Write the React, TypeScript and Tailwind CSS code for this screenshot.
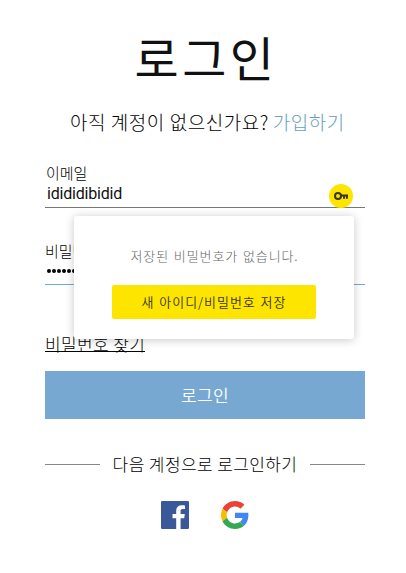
import React from "react";

function KeyBadge() {
  return (
    <span className="absolute right-3 top-0 flex h-6 w-6 items-center justify-center rounded-full bg-[#fee500]">
      <svg width="14" height="8" viewBox="0 0 14 8" fill="none" stroke="#3c3519" strokeWidth="2">
        <circle cx="4" cy="4" r="3" />
        <path d="M7 3.4h7M10 3.4v3.4M12.9 3.4v3.4" />
      </svg>
    </span>
  );
}

function FacebookLogo() {
  return (
    <svg width="28" height="28" viewBox="0 0 28 28">
      <rect width="28" height="28" rx="1.2" fill="#3b5998" />
      <path
        fill="#fff"
        d="M15.2 28V17.2h-3.7v-4.3h3.7V9.8c0-3.7 2.2-5.6 5.5-5.6 1.5 0 2.9.1 3.3.2V8h-2.3c-1.8 0-2.1.9-2.1 2.1v2.8h4.2l-.6 4.3h-3.6V28z"
      />
    </svg>
  );
}

function GoogleLogo() {
  return (
    <svg width="28" height="28" viewBox="0 0 48 48">
      <path fill="#ea4335" d="M24 9.5c3.54 0 6.71 1.22 9.21 3.6l6.85-6.85C35.9 2.38 30.47 0 24 0 14.62 0 6.51 5.38 2.56 13.22l7.98 6.19C12.43 13.72 17.74 9.5 24 9.5z" />
      <path fill="#4285f4" d="M46.98 24.55c0-1.57-.15-3.09-.38-4.55H24v9.02h12.94c-.58 2.96-2.26 5.48-4.78 7.18l7.73 6c4.51-4.18 7.09-10.36 7.09-17.65z" />
      <path fill="#fbbc05" d="M10.53 28.59c-.48-1.45-.76-2.99-.76-4.59s.27-3.14.76-4.59l-7.98-6.19C.92 16.46 0 20.12 0 24c0 3.88.92 7.54 2.56 10.78l7.97-6.19z" />
      <path fill="#34a853" d="M24 48c6.48 0 11.93-2.13 15.89-5.81l-7.73-6c-2.15 1.45-4.92 2.3-8.16 2.3-6.26 0-11.57-4.22-13.47-9.91l-7.98 6.19C6.51 42.62 14.62 48 24 48z" />
    </svg>
  );
}

function SavePasswordPopup() {
  return (
    <div className="absolute left-[29px] top-2 flex h-[123px] w-[280px] flex-col items-center rounded-[3px] bg-white pt-7 shadow-[0_1px_10px_rgba(0,0,0,0.22)]">
      <p className="h-6 whitespace-nowrap pl-px text-[13px] font-light leading-[23px] tracking-[0.9px] [word-spacing:1px] text-[#666]">저장된 비밀번호가 없습니다.</p>
      <button className="mt-[17px] h-[34px] w-[204px] whitespace-nowrap rounded-[2px] bg-[#fee500] text-[13px] font-[350] tracking-[0.95px] [word-spacing:1px] text-[#3c3519]">
        새 아이디/비밀번호 저장
      </button>
    </div>
  );
}

export default function App() {
  return (
    <main className="h-[573px] w-[406px] overflow-hidden bg-white pl-[45px] pr-[41px] font-['Noto_Sans_CJK_KR',sans-serif] text-[#111]">
      <h1 className="h-[100px] whitespace-nowrap pl-[2px] pt-[19px] text-center text-[48px] font-normal leading-[74px] tracking-[3.5px]">로그인</h1>
      <p className="h-11 whitespace-nowrap pl-[25px] text-[19px] font-light leading-[43px] tracking-[0.55px] text-black">
        아직 계정이 없으신가요? <a className="-ml-px text-[#6a9fbc]">가입하기</a>
      </p>
      <div className="mt-[18px] h-[22px] pl-px text-[15px] font-light leading-[22px] text-black">이메일</div>
      <div className="relative h-6 border-b border-[#777]">
        <div className="pl-[2px] font-['Roboto','Liberation_Sans',sans-serif] text-base leading-5 tracking-[-0.2px]">idididibidid</div>
        <KeyBadge />
      </div>
      <div className="relative h-[163px]">
        <div className="h-[31px]" />
        <div className="h-6 text-[15px] font-light leading-6 text-black">비밀번호</div>
        <div className="flex h-[22px] gap-[1px] border-b border-[#76a8d1] pl-[2px] pt-[6px]">
          {Array.from({ length: 8 }, (_, i) => (
            <span key={i} className="h-1 w-1 rounded-full bg-black" />
          ))}
        </div>
        <a className="mt-[46px] block h-[21px] w-[100px] whitespace-nowrap border-b border-black text-[17px] font-light leading-[25px] tracking-[0.4px] text-black">비밀번호 찾기</a>
        <SavePasswordPopup />
      </div>
      <button className="block h-12 w-full bg-[#76a8d1] text-[17px] font-[350] tracking-[0.3px] text-white">로그인</button>
      <div className="mt-[32px] flex h-[26px] items-center justify-between">
        <span className="h-px w-[55px] bg-[#888]" />
        <span className="whitespace-nowrap text-[17px] font-light leading-[24px] tracking-[0.4px] text-black">다음 계정으로 로그인하기</span>
        <span className="h-px w-[55px] bg-[#888]" />
      </div>
      <div className="mt-[24px] flex justify-center gap-8">
        <FacebookLogo />
        <GoogleLogo />
      </div>
    </main>
  );
}
